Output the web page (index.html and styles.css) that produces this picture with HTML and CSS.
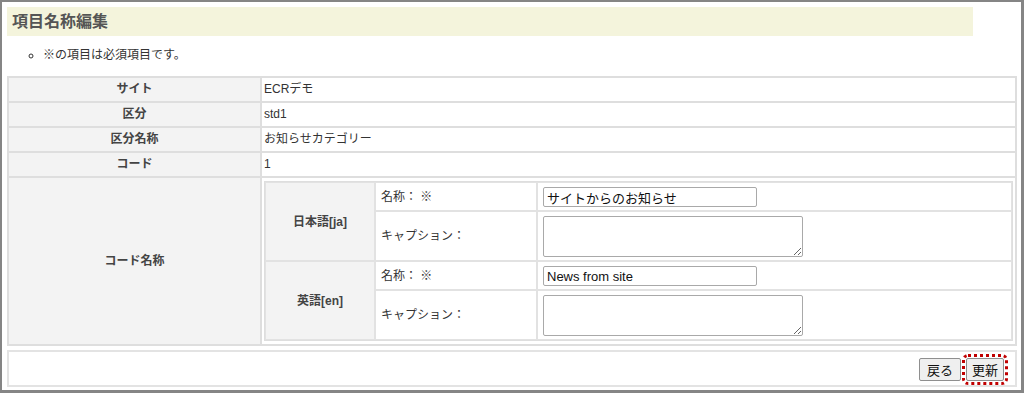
FILE: index.html
```html
<!DOCTYPE html>
<html lang="ja">
<head>
<meta charset="utf-8">
<title>項目名称編集</title>
<link rel="stylesheet" href="styles.css">
</head>
<body>
<div class="frame">
  <h1 class="page-title">項目名称編集</h1>
  <ul class="notes">
    <li>※の項目は必須項目です。</li>
  </ul>
  <table class="form-table">
    <colgroup><col class="col-label"><col></colgroup>
    <tr><th>サイト</th><td>ECRデモ</td></tr>
    <tr><th>区分</th><td>std1</td></tr>
    <tr><th>区分名称</th><td>お知らせカテゴリー</td></tr>
    <tr><th>コード</th><td>1</td></tr>
    <tr>
      <th>コード名称</th>
      <td class="nest-cell">
        <table class="lang-table">
          <colgroup><col class="col-lang"><col class="col-field"><col></colgroup>
          <tr>
            <th rowspan="2">日本語[ja]</th>
            <td class="field">名称： ※</td>
            <td class="input-cell"><input class="text-input" type="text" value="サイトからのお知らせ"></td>
          </tr>
          <tr class="tall">
            <td class="field">キャプション：</td>
            <td class="input-cell"><textarea class="area"></textarea></td>
          </tr>
          <tr>
            <th rowspan="2">英語[en]</th>
            <td class="field">名称： ※</td>
            <td class="input-cell"><input class="text-input" type="text" value="News from site"></td>
          </tr>
          <tr class="tall">
            <td class="field">キャプション：</td>
            <td class="input-cell"><textarea class="area"></textarea></td>
          </tr>
        </table>
      </td>
    </tr>
  </table>
  <div class="actions">
    <button class="btn btn-back" type="button">戻る</button>
    <button class="btn btn-focus" type="button">更新</button>
  </div>
</div>
</body>
</html>
```
FILE: styles.css
```css
html, body {
  margin: 0;
  padding: 0;
  background: #fff;
}
body {
  font-family: "Liberation Sans", "Noto Sans CJK JP", sans-serif;
  font-size: 12px;
  color: #333;
}
.frame {
  box-sizing: border-box;
  width: 1024px;
  height: 393px;
  border-style: solid;
  border-color: #858585;
  border-width: 2px 3px 3px 2px;
  padding: 5px 4px 0 5px;
  overflow: hidden;
}
.page-title {
  margin: 0;
  width: 961px;
  height: 29px;
  line-height: 29px;
  padding-left: 5px;
  background: #f4f4dc;
  font-size: 16px;
  font-weight: bold;
  color: #555;
}
.notes {
  margin: 11px 0 13px;
  padding-left: 36px;
  list-style: circle;
}
.notes li {
  line-height: 16px;
}
.form-table {
  width: 100%;
  table-layout: fixed;
  border-collapse: separate;
  border-spacing: 0;
  border: 1px solid #dedede;
}
.col-label { width: 253px; }
.form-table th,
.form-table td {
  border: 1px solid #dedede;
  padding: 4px 2px;
  line-height: 15px;
  text-align: left;
  font-weight: normal;
}
.form-table > tbody > tr > th {
  background: #f3f3f3;
  text-align: center;
  font-weight: bold;
  color: #444;
}
.form-table td.nest-cell {
  padding: 3px 2px 3px;
}
.lang-table {
  width: 100%;
  table-layout: fixed;
  border-collapse: separate;
  border-spacing: 0;
  border: 1px solid #dedede;
}
.col-lang { width: 110px; }
.col-field { width: 162px; }
.lang-table th,
.lang-table td {
  border: 1px solid #e2e2e2;
  padding: 4px 5px 3px;
  line-height: 15px;
}
.lang-table th {
  background: #f3f3f3;
  text-align: center;
  font-weight: bold;
  color: #444;
}
.lang-table td.field {
  padding-left: 5px;
}
.lang-table td.input-cell {
  padding: 4px 5px 3px;
}
.text-input {
  display: block;
  box-sizing: border-box;
  width: 214px;
  height: 20px;
  margin: 0;
  padding: 1px 3px;
  border: 1px solid #a9a9a9;
  border-radius: 2px;
  font-family: "Liberation Sans", "Noto Sans CJK JP", sans-serif;
  font-size: 13px;
  color: #111;
}
.area {
  display: block;
  box-sizing: border-box;
  width: 260px;
  height: 41px;
  margin: 0;
  padding: 2px;
  border: 1px solid #a9a9a9;
  border-radius: 2px;
  font-family: "Liberation Sans", sans-serif;
  font-size: 13px;
}
.actions {
  margin-top: 4px;
  border: 2px solid #e3e3e3;
  display: flex;
  justify-content: flex-end;
  align-items: flex-start;
  gap: 5px;
  padding: 6px 11px 0 0;
  box-sizing: border-box;
  height: 37px;
}
.btn {
  height: 23px;
  margin: 0;
  padding: 0 6px;
  font-family: "Liberation Sans", "Noto Sans CJK JP", sans-serif;
  font-size: 13px;
  color: #111;
  background: #efefef;
  border: 1px solid #8f8f8f;
  border-radius: 2px;
}
.btn-back {
  padding: 0 7px;
}
.btn-focus {
  padding: 0 5px;
  outline: 3px dotted #c00000;
  outline-offset: 1px;
}
```
